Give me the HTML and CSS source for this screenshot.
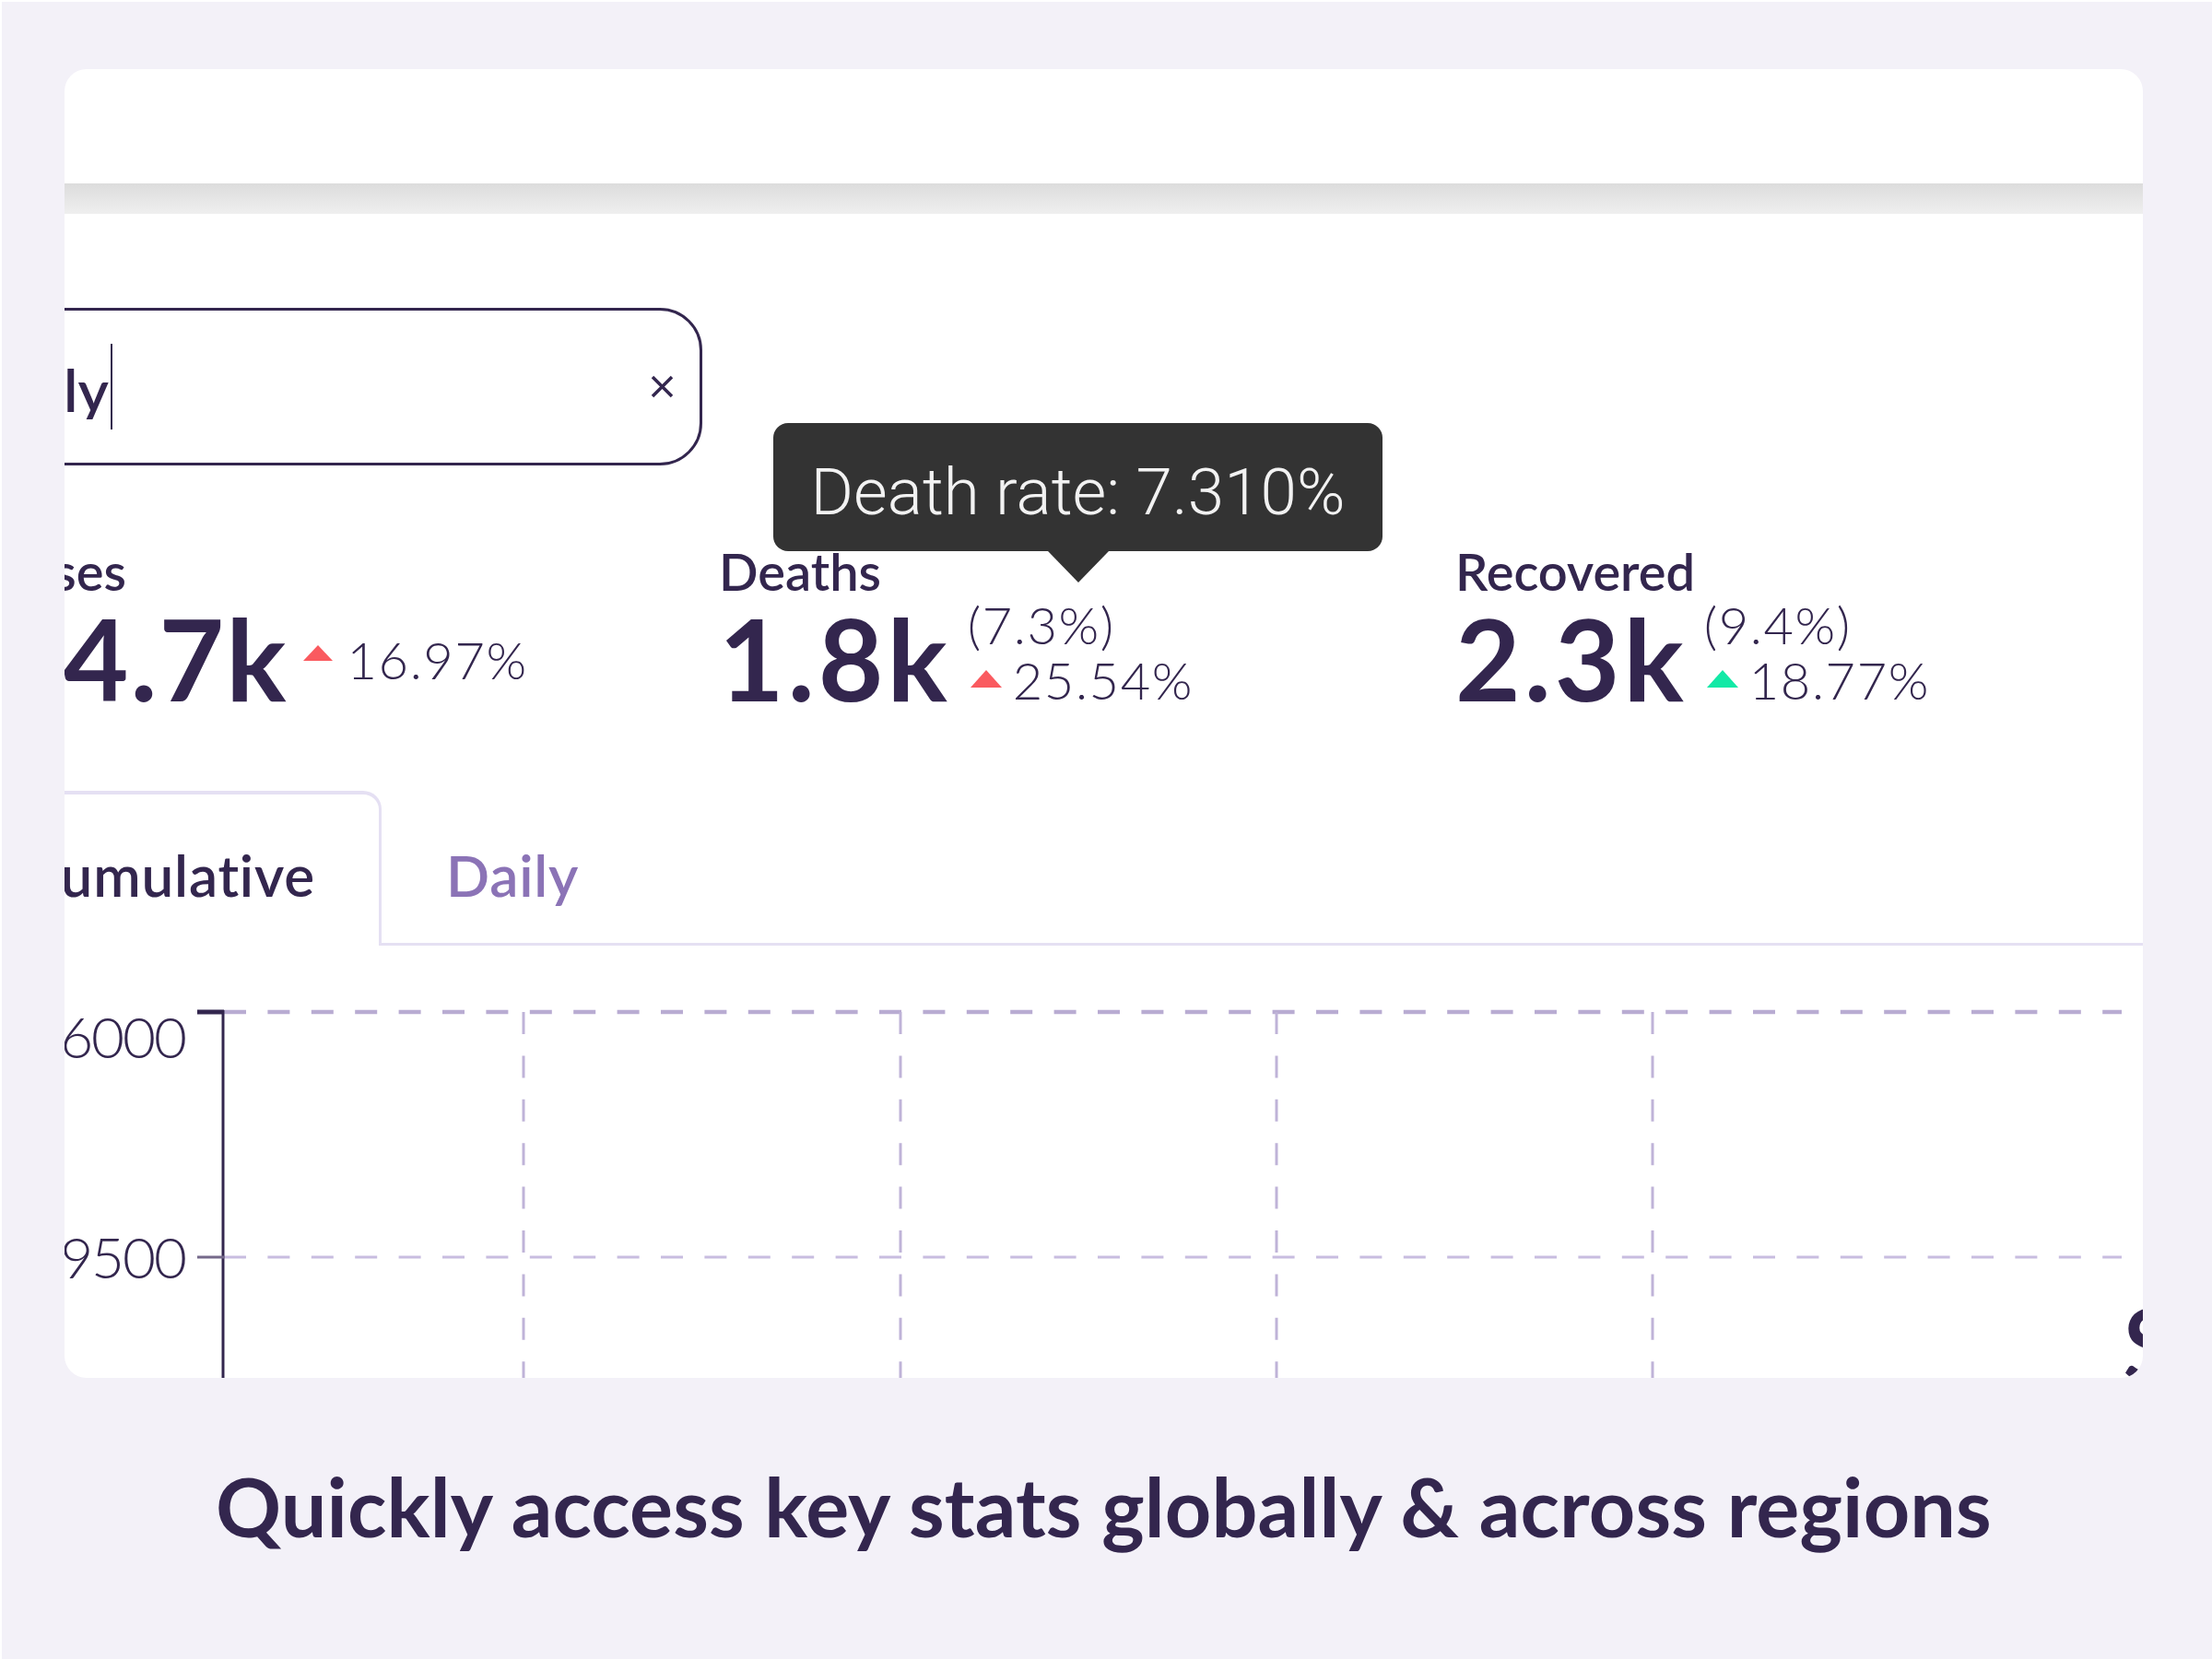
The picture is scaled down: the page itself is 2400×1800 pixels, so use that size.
FILE: index.html
```html
<!DOCTYPE html>
<html lang="en">
<head>
<meta charset="utf-8">
<title>Key stats</title>
<link rel="stylesheet" href="styles.css">
</head>
<body>
<div class="page">
  <div class="card">
    <div class="appbar"></div>
    <div class="appbar-shadow"></div>
    <div class="content">
      <div class="search">
        <div class="query">Italy</div>
        <div class="caret"></div>
        <div class="spacer"></div>
        <svg class="clear" width="27" height="27" viewBox="0 0 27 27"><path d="M3 3L24 24M24 3L3 24"/></svg>
      </div>

      <div class="stats">
        <div class="stat stat-cases">
          <div class="label">Cases</div>
          <div class="figure">
            <span class="big">24.7k</span>
            <div class="side side-single">
              <div class="chg"><span class="tri tri-red tri-small"></span>16.97%</div>
            </div>
          </div>
        </div>
        <div class="stat stat-deaths">
          <div class="tooltip">Death rate: 7.310%</div>
          <div class="label">Deaths</div>
          <div class="figure">
            <span class="big">1.8k</span>
            <div class="side">
              <div class="pct">(7.3%)</div>
              <div class="chg"><span class="tri tri-red"></span>25.54%</div>
            </div>
          </div>
        </div>
        <div class="stat">
          <div class="label">Recovered</div>
          <div class="figure">
            <span class="big">2.3k</span>
            <div class="side">
              <div class="pct">(9.4%)</div>
              <div class="chg"><span class="tri tri-green"></span>18.77%</div>
            </div>
          </div>
        </div>
      </div>

      <div class="tabs">
        <div class="tab tab-active">Cumulative</div>
        <div class="tab-rest"><span class="tab tab-idle">Daily</span></div>
      </div>

      <svg class="chart" width="2330" height="440" viewBox="0 0 2330 440">
        <line class="gh gh-top" x1="243" y1="38" x2="2302" y2="38"/>
        <line class="gh gh-mid" x1="243" y1="304" x2="2302" y2="304"/>
        <line class="gv" x1="568" y1="38" x2="568" y2="440"/>
        <line class="gv" x1="977" y1="38" x2="977" y2="440"/>
        <line class="gv" x1="1385" y1="38" x2="1385" y2="440"/>
        <line class="gv" x1="1793" y1="38" x2="1793" y2="440"/>
        <line class="axis" x1="242" y1="36" x2="242" y2="440"/>
        <line class="tick" x1="214" y1="38" x2="243" y2="38"/>
        <line class="tick tick-mid" x1="214" y1="304" x2="243" y2="304"/>
        <text class="ylab" x="201" y="88">26000</text>
        <text class="ylab" x="201" y="327">19500</text>
        <text class="xlab" x="2303" y="439">S</text>
      </svg>
    </div>
  </div>
  <div class="caption">Quickly access key stats globally &amp; across regions</div>
</div>
</body>
</html>
```

FILE: styles.css
```css
* { box-sizing: border-box; }

html, body {
  margin: 0;
  padding: 0;
}

body {
  width: 2400px;
  height: 1800px;
  overflow: hidden;
  background: #ffffff;
  font-family: Lato, "Noto Sans", sans-serif;
  color: #33264e;
}

.page {
  margin: 2px 0 0 2px;
  height: 1798px;
  background: #f3f1f8;
  padding: 73px 0 0 68px;
}

.card {
  width: 2255px;
  height: 1420px;
  background: #ffffff;
  border-radius: 24px;
  overflow: hidden;
}

.appbar {
  height: 124px;
}

.appbar-shadow {
  height: 33px;
  background: linear-gradient(#dcdcdc, #efefef);
}

.content {
  margin-left: -70px;
  width: 2395px;
}

/* search */
.search {
  margin: 102px 0 0 -60px;
  width: 822px;
  height: 171px;
  border: 3.5px solid #33264e;
  border-radius: 46px;
  display: flex;
  align-items: center;
}

.query {
  width: 175px;
  text-align: right;
  white-space: nowrap;
  overflow: hidden;
  font-size: 64px;
  line-height: 64px;
  font-weight: 600;
  margin-top: 6px;
}

.caret {
  width: 2px;
  height: 93px;
  margin-left: 2px;
  background: #33264e;
}

.spacer { flex: 1; }

.clear {
  margin-right: 27px;
  fill: none;
  stroke: #33264e;
  stroke-width: 3.5;
}

/* stats */
.stats {
  margin-top: 87px;
  padding-left: 2px;
  display: grid;
  grid-template-columns: 778px 799px 1fr;
}

.stat { position: relative; }

.label {
  font-size: 56px;
  line-height: 56px;
  font-weight: 600;
  white-space: nowrap;
}

.stat-cases .label { margin-left: -9px; }
.stat-cases .figure { margin-left: -6px; }
.stat-cases .big { letter-spacing: 2px; }

.figure {
  margin-top: 5px;
  display: flex;
  align-items: flex-start;
}

.big {
  font-size: 122px;
  line-height: 122px;
  font-weight: 700;
  letter-spacing: 4px;
  white-space: nowrap;
}

.side {
  margin: -5px 0 0 18px;
  font-size: 56px;
  line-height: 60px;
  font-weight: 300;
  letter-spacing: 1.6px;
  white-space: nowrap;
}

.side-single { margin-top: 33px; margin-left: 14px; }

.tri {
  display: inline-block;
  width: 0;
  height: 0;
  border-left: 17px solid transparent;
  border-right: 17px solid transparent;
  border-bottom: 19px solid #fa5a5f;
  margin: 0 12px 0 3px;
  vertical-align: 13px;
}

.tri-red { border-bottom-color: #fa5a5f; }
.tri-green { border-bottom-color: #12e9a6; }

.tri-small {
  border-left-width: 16px;
  border-right-width: 16px;
  border-bottom-width: 17px;
  vertical-align: 20px;
  margin-right: 15px;
}

/* tooltip */
.tooltip {
  position: absolute;
  left: 59px;
  top: -133px;
  width: 661px;
  height: 139px;
  padding-top: 10px;
  background: #333333;
  border-radius: 16px;
  color: #f2f2f2;
  font-family: Roboto, "Liberation Sans", sans-serif;
  font-weight: 300;
  font-size: 71px;
  line-height: 71px;
  display: flex;
  align-items: center;
  justify-content: center;
  white-space: nowrap;
  z-index: 2;
}

.tooltip::after {
  content: "";
  position: absolute;
  left: 298px;
  top: 139px;
  border-left: 33px solid transparent;
  border-right: 33px solid transparent;
  border-top: 34px solid #333333;
}

/* tabs */
.tabs {
  margin-top: 83px;
  display: flex;
}

.tab {
  font-size: 62px;
  line-height: 62px;
  font-weight: 600;
  letter-spacing: 0.8px;
  white-space: nowrap;
}

.tab-active {
  margin-left: -100px;
  width: 514px;
  height: 168px;
  border-style: solid;
  border-color: #e5e0f3;
  border-width: 4px 3px 0 0;
  border-radius: 0 20px 0 0;
  padding: 56px 69px 0 0;
  text-align: right;
  overflow: hidden;
}

.tab-rest {
  flex: 1;
  height: 168px;
  border-bottom: 3px solid #e5e0f3;
  padding: 60px 0 0 70px;
}

.tab-idle { color: #8b73b6; }

/* chart */
.chart {
  display: block;
  margin-top: 34px;
}

.gh, .gv {
  fill: none;
  stroke-dasharray: 24 23.4;
}

.gh-top { stroke: #b9acd2; stroke-width: 4.5; }
.gh-mid { stroke: #c8bde0; stroke-width: 3; }
.gv { stroke: #bfb3d8; stroke-width: 3; }

.axis {
  stroke: #33264e;
  stroke-width: 3;
}

.tick {
  stroke: #33264e;
  stroke-width: 5;
}

.tick-mid {
  stroke: #75698a;
  stroke-width: 3;
}

.ylab {
  fill: #33264e;
  font-family: Lato, "Noto Sans", sans-serif;
  font-weight: 300;
  font-size: 62px;
  letter-spacing: -2px;
  text-anchor: end;
}

.xlab {
  fill: #33264e;
  font-family: Lato, "Noto Sans", sans-serif;
  font-weight: 600;
  font-size: 110px;
}

/* caption */
.caption {
  width: 2255px;
  margin-top: 95px;
  text-align: center;
  font-size: 88px;
  line-height: 88px;
  font-weight: 700;
  letter-spacing: 0.15px;
  white-space: nowrap;
}
```
